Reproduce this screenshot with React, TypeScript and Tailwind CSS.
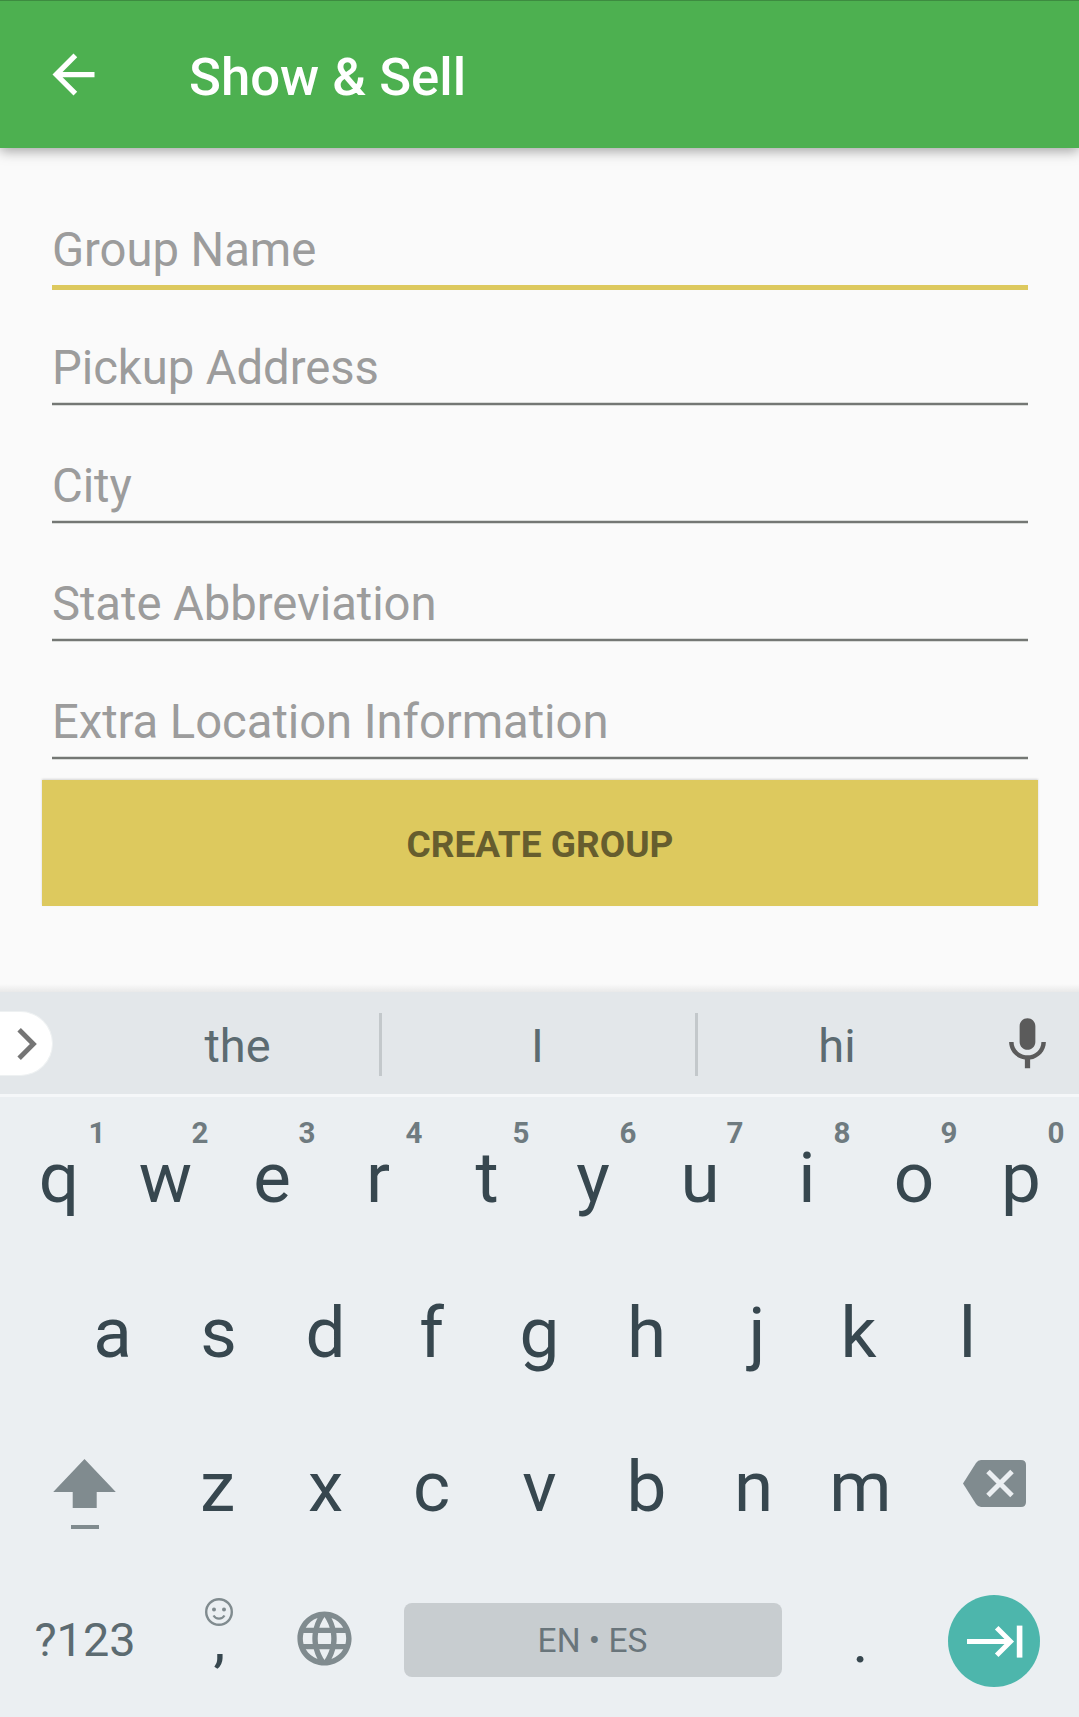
const fields = [
  { label: "Group Name", active: true },
  { label: "Pickup Address", active: false },
  { label: "City", active: false },
  { label: "State Abbreviation", active: false },
  { label: "Extra Location Information", active: false },
];

const topRow = [
  ["q", "1"], ["w", "2"], ["e", "3"], ["r", "4"], ["t", "5"],
  ["y", "6"], ["u", "7"], ["i", "8"], ["o", "9"], ["p", "0"],
];

// Optical centring for glyphs whose side bearings are uneven.
const nudges: Record<string, string> = {
  q: "pl-[2px]",
  w: "pl-[1px]",
  r: "pr-[2px]",
  t: "pl-[2px]",
  a: "pl-[2px]",
  f: "pr-[2px]",
  j: "pl-[7px]",
  k: "pr-[4px]",
  z: "pr-[2px]",
  c: "pr-[2px]",
};

function AppBar() {
  return (
    <header className="relative flex h-[148px] items-center border-t border-[#3d8b40] bg-[#4db050] pl-[42px] shadow-[0_3px_12px_rgba(0,0,0,0.36)]">
      <svg viewBox="0 0 24 24" className="size-[63px]" fill="#fff">
        <path d="M20 11H7.83l5.59-5.59L12 4l-8 8 8 8 1.41-1.41L7.83 13H20v-2z" />
      </svg>
      <h1 className="ml-[84px] pt-[4px] text-[52.7px] leading-[60px] font-medium text-white">Show &amp; Sell</h1>
    </header>
  );
}

function Field({ label, active }: { label: string; active: boolean }) {
  return (
    <div className="flex h-[118px] flex-col px-[10px] pt-12">
      <span className="text-[47.25px] leading-[57px] tracking-[-0.07px] text-[#9c9c9c]">{label}</span>
      {active ? (
        <div className="mt-[6px] h-[5px] bg-[#ddc95e]" />
      ) : (
        <div className="mt-[5px] h-[4px] border-y border-[#d9dbd9] bg-[#747774]" />
      )}
    </div>
  );
}

function Key({ char, hint }: { char: string; hint?: string }) {
  return (
    <div className="relative h-full w-[107px]">
      <div className={`flex h-full items-center justify-center pt-[1px] text-[71px] leading-[80px] text-[#37474f] ${nudges[char] ?? ""}`}>
        {char}
      </div>
      {hint && (
        <span
          className={`absolute top-[18px] w-[31px] text-center text-[29.5px] leading-[30px] font-bold text-[#6f7b80] ${
            hint === "1" ? "left-[77px]" : "left-[73px]"
          }`}
        >
          {hint}
        </span>
      )}
    </div>
  );
}

function Suggestions() {
  return (
    <div className="flex h-[105px] border-b-[3px] border-[#f5f7f9] bg-[#e3e7ea] text-[47px] leading-[56px] text-[#5c6b71]">
      <div className="mt-[19px] flex h-[65px] w-[53px] items-center rounded-r-full border border-l-0 border-[#eef1f2] bg-white">
        <svg viewBox="0 0 53 64" className="h-[64px] w-[53px]" fill="none" stroke="#757575" strokeWidth="5">
          <path d="M19.500 17.500 34 32 19.500 46.500" />
        </svg>
      </div>
      <div className="ml-[43px] flex w-[283px] items-center justify-center pt-[6px]">the</div>
      <div className="mt-[21px] h-[63px] w-[3px] bg-[#c3c8cb]" />
      <div className="flex w-[313px] items-center justify-center pt-[6px] pr-[2px]">I</div>
      <div className="mt-[21px] h-[63px] w-[3px] bg-[#c3c8cb]" />
      <div className="flex w-[278px] items-center justify-center pt-[6px]">hi</div>
      <svg viewBox="0 0 24 24" className="mt-[21px] ml-[20px] size-[63px]" fill="#5b5b5b">
        <path d="M12 14c1.66 0 2.99-1.34 2.99-3L15 5c0-1.66-1.34-3-3-3S9 3.34 9 5v6c0 1.66 1.34 3 3 3zm5.300-3c0 3-2.540 5.100-5.300 5.100S6.700 14 6.700 11H5c0 3.410 2.720 6.230 6 6.720V21h2v-3.280c3.280-.48 6-3.300 6-6.720h-1.700z" />
      </svg>
    </div>
  );
}

function Keyboard() {
  return (
    <section className="flex h-[725px] flex-col bg-[#ebeff2]">
      <Suggestions />
      <div className="mt-[3px] flex h-[155px] justify-center">
        {topRow.map(([c, h]) => <Key key={c} char={c} hint={h} />)}
      </div>
      <div className="flex h-[154px] justify-center">
        {[..."asdfghjkl"].map((c) => <Key key={c} char={c} />)}
      </div>
      <div className="flex h-[155px]">
        <svg viewBox="0 0 165 155" className="h-[155px] w-[165px]" fill="#808b8f">
          <path d="M84.500 50 115.800 83H96.700v16H72.700V83H53.200z" />
          <path d="M71 116h28v4H71z" />
        </svg>
        {[..."zxcvbnm"].map((c) => <Key key={c} char={c} />)}
        <svg viewBox="0 0 165 155" className="h-[155px] w-[165px]">
          <path d="M67 51h40q5 0 5 5v37q0 5-5 5H67q-3 0-5-3L49 74.500 62 54q2-3 5-3z" fill="#808b8f" />
          <path d="M74 62.500 98 86.500M98 62.500 74 86.500" stroke="#ebeff2" strokeWidth="5" />
        </svg>
      </div>
      <div className="flex h-[153px]">
        <div className="flex w-[165px] items-center justify-center pb-[2px] pl-[5px] text-[46.8px] leading-[56px] text-[#5c6b71]">?123</div>
        <div className="flex w-[107px] flex-col items-center pt-[34px]">
          <svg viewBox="0 0 28 28" className="size-[28px]" fill="none" stroke="#808b8f">
            <circle cx="14" cy="14" r="12.800" strokeWidth="2.400" />
            <circle cx="9" cy="11.500" r="2" fill="#808b8f" stroke="none" />
            <circle cx="19" cy="11.500" r="2" fill="#808b8f" stroke="none" />
            <path d="M8.500 17.500c2.500 4.200 8.500 4.200 11 0" strokeWidth="2.200" />
          </svg>
          <span className="-mt-[21px] pl-[2px] text-[60px] leading-[70px] text-[#37474f]">,</span>
        </div>
        <div className="flex w-[107px] items-center justify-center pr-[2px] pb-[4px]">
          <svg viewBox="0 0 24 24" className="size-[65px]" fill="#808b8f">
            <path d="M11.99 2C6.47 2 2 6.480 2 12s4.470 10 9.990 10C17.520 22 22 17.520 22 12S17.520 2 11.990 2zm6.930 6h-2.950c-.32-1.250-.78-2.450-1.380-3.560 1.840.63 3.370 1.910 4.330 3.560zM12 4.040c.83 1.200 1.480 2.530 1.910 3.960h-3.820c.43-1.430 1.080-2.760 1.910-3.960zM4.260 14C4.100 13.360 4 12.690 4 12s.1-1.360.26-2h3.380c-.08.66-.14 1.320-.14 2 0 .68.060 1.340.14 2H4.260zm.82 2h2.950c.32 1.250.78 2.450 1.380 3.560-1.840-.63-3.370-1.900-4.330-3.560zm2.950-8H5.080c.96-1.660 2.490-2.930 4.330-3.560C8.810 5.550 8.350 6.750 8.030 8zM12 19.960c-.83-1.200-1.480-2.530-1.910-3.960h3.820c-.43 1.430-1.080 2.760-1.910 3.960zM14.340 14H9.660c-.09-.66-.16-1.320-.16-2 0-.68.070-1.350.16-2h4.680c.09.65.16 1.320.16 2 0 .68-.07 1.340-.16 2zm.25 5.560c.6-1.110 1.060-2.310 1.380-3.560h2.950c-.96 1.650-2.490 2.930-4.330 3.560zM16.360 14c.08-.66.14-1.320.14-2 0-.68-.06-1.340-.14-2h3.380c.16.64.26 1.310.26 2s-.1 1.360-.26 2h-3.380z" />
          </svg>
        </div>
        <div className="mt-[39px] ml-[25px] flex h-[74px] w-[378px] items-center justify-center rounded-lg bg-[#c8cdd0] pt-[1px] pr-[1px] text-[33.5px] leading-[40px] text-[#69757b]">
          EN • ES
        </div>
        <div className="ml-[25px] flex w-[107px] justify-center pt-[43px] text-[60px] leading-[70px] text-[#37474f]">.</div>
        <div className="mt-[31px] ml-[34px] size-[92px] rounded-full bg-[#4db6ac]">
          <svg viewBox="0 0 92 92" className="size-[92px]" fill="none" stroke="#fff" strokeWidth="5">
            <path d="M19 46.500h43M48.700 32.700 62.500 46.500 48.700 60.300" />
            <path d="M71.600 30.600v32" strokeWidth="5.600" />
          </svg>
        </div>
      </div>
    </section>
  );
}

export default function App() {
  return (
    <div className="flex h-[1717px] w-[1079px] flex-col overflow-hidden bg-[#fafafa] font-['Roboto',sans-serif]">
      <AppBar />
      <main className="flex h-[836px] flex-col pt-[26px] pr-[41px] pl-[42px]">
        {fields.map((f) => <Field key={f.label} {...f} />)}
        <button className="mt-4 h-[126px] bg-[#ddc95e] pt-[3px] text-[37px] font-bold text-[#665d2e] shadow-[0_-1px_2px_rgba(0,0,0,0.15)]">
          CREATE GROUP
        </button>
      </main>
      <div className="h-2 bg-linear-to-b from-[#fafafa] to-[#e9e9e9]" />
      <Keyboard />
    </div>
  );
}
